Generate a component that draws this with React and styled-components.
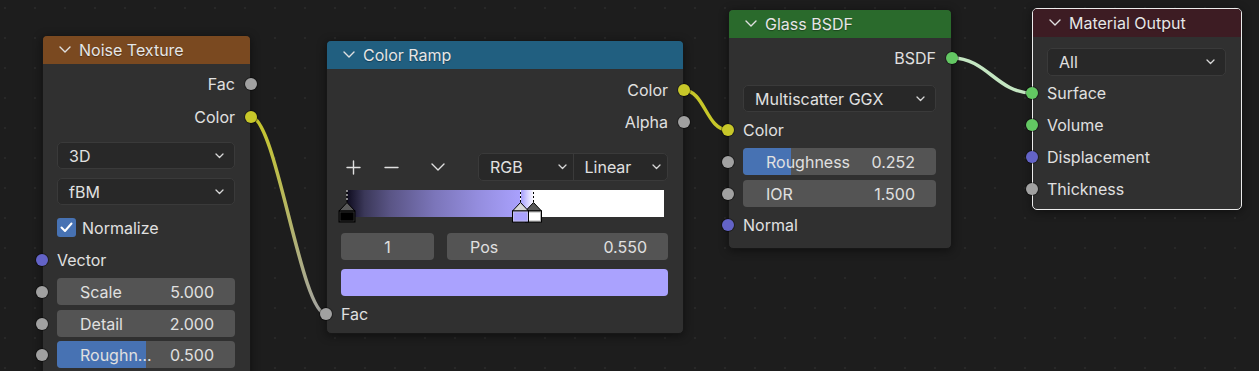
import React from 'react';
import styled, { createGlobalStyle } from 'styled-components';

const GlobalStyle = createGlobalStyle`
  html, body {
    margin: 0;
    padding: 0;
  }
  body {
    background: #1d1d1d;
    font-family: Inter, "Noto Sans", sans-serif;
    overflow: hidden;
  }
`;

const Canvas = styled.div`
  position: relative;
  width: 1259px;
  height: 371px;
  overflow: hidden;
  background-color: #1d1d1d;
  background-image: radial-gradient(circle at center, #282828 0 1px, transparent 1.5px);
  background-size: 30px 30px;
  background-position: -10px -7px;
`;

const Links = styled.svg`
  position: absolute;
  left: 0;
  top: 0;
`;

const Node = styled.div`
  position: absolute;
  left: ${(p) => p.$x}px;
  top: ${(p) => p.$y}px;
  width: ${(p) => p.$w}px;
  box-sizing: border-box;
  background: #303030;
  border-radius: 5px;
  border: 1px solid ${(p) => (p.$selected ? '#ececec' : '#171717')};
  box-shadow: 0 2px 10px rgba(0, 0, 0, 0.45);
  color: #e0e0e0;
  font-size: 16px;
`;

const Header = styled.div`
  height: 28px;
  display: flex;
  align-items: center;
  gap: 8px;
  padding-left: 16px;
  background: ${(p) => p.$color};
  border-radius: 4px 4px 0 0;
  color: #e6e6e6;
  text-shadow: 0 1px 1px rgba(0, 0, 0, 0.35);
`;

const Body = styled.div`
  display: flex;
  flex-direction: column;
  padding-bottom: ${(p) => p.$pb || 0}px;
`;

const Row = styled.div`
  position: relative;
  display: flex;
  align-items: center;
  justify-content: ${(p) => (p.$out ? 'flex-end' : 'flex-start')};
  height: ${(p) => p.$h || 27}px;
  margin-top: ${(p) => p.$mt || 0}px;
  padding: 0 15px 0 14px;
  gap: 6px;
`;

const Socket = styled.span`
  position: absolute;
  top: 50%;
  ${(p) => (p.$out ? 'right: -7px;' : 'left: -7px;')}
  width: 12px;
  height: 12px;
  margin-top: -6px;
  border-radius: 50%;
  background: ${(p) => p.$color};
  box-shadow: 0 0 0 1px rgba(0, 0, 0, 0.35);
`;

const Field = styled.div`
  position: relative;
  flex: ${(p) => (p.$w ? `0 0 ${p.$w}px` : '1')};
  margin-left: ${(p) => p.$ml || 0}px;
  height: 100%;
  display: flex;
  align-items: center;
  justify-content: ${(p) => (p.$center ? 'center' : 'space-between')};
  padding: ${(p) => (p.$center ? '0' : '0 21px 0 23px')};
  box-sizing: border-box;
  background: #545454;
  border-radius: 4px;
  overflow: hidden;
  &::before {
    content: '';
    position: absolute;
    left: 0;
    top: 0;
    bottom: 0;
    width: ${(p) => p.$fill || 0}%;
    background: #4772b3;
  }
  span {
    position: relative;
  }
`;

const Select = styled.div`
  flex: 1;
  height: 100%;
  display: flex;
  align-items: center;
  justify-content: space-between;
  padding: 0 10px 0 11px;
  box-sizing: border-box;
  background: #282828;
  border: 1px solid #3a3a3a;
  border-radius: 5px;
`;

const SegSelect = styled.div`
  margin-left: auto;
  width: 190px;
  height: 100%;
  display: flex;
  box-sizing: border-box;
  background: #282828;
  border: 1px solid #3a3a3a;
  border-radius: 5px;
`;

const Seg = styled.div`
  flex: 1;
  display: flex;
  align-items: center;
  justify-content: space-between;
  padding: 0 6px 0 11px;
  & + & {
    border-left: 1px solid #3a3a3a;
  }
`;

const Check = styled.span`
  width: 19px;
  height: 19px;
  border-radius: 3px;
  background: #4772b3;
  display: flex;
  align-items: center;
  justify-content: center;
`;

const IconBtn = styled.span`
  width: ${(p) => p.$w}px;
  margin-left: ${(p) => p.$ml || 0}px;
  display: flex;
  justify-content: center;
  align-items: center;
`;

const RampWrap = styled.div`
  position: relative;
  flex: 1;
  height: 100%;
  margin: 0 4px 0 6px;
`;

const RampBar = styled.div`
  height: 100%;
  background: linear-gradient(
    to right,
    #0f0c1f 0%,
    #3b3859 5.5%,
    #5a5586 13.75%,
    #7b75b9 27.5%,
    #948dde 41.25%,
    #a9a1fd 55%,
    #d6d2ff 57%,
    #ffffff 59%,
    #ffffff 100%
  );
`;

const Stops = styled.svg`
  position: absolute;
  left: -10px;
  top: 0;
  overflow: visible;
`;

const Swatch = styled.div`
  flex: 1;
  height: 100%;
  border-radius: 4px;
  background: #aaa2fe;
`;

const Chevron = ({ size = 12 }) => (
  <svg width={size} height={size * 0.6} viewBox="0 0 12 7" fill="none">
    <path d="M1 1 L6 6 L11 1" stroke="#e0e0e0" strokeWidth="1.4" strokeLinecap="round" strokeLinejoin="round" />
  </svg>
);

const SmallChevron = () => (
  <svg width="9" height="6" viewBox="0 0 9 6" fill="none">
    <path d="M1 1 L4.5 4.5 L8 1" stroke="#d8d8d8" strokeWidth="1.3" strokeLinecap="round" strokeLinejoin="round" />
  </svg>
);

const GRAY = '#a1a1a1';
const YELLOW = '#c7c729';
const PURPLE = '#6363c7';
const GREEN = '#63c763';

function Out({ label, color, h, mt }) {
  return (
    <Row $out $h={h} $mt={mt}>
      {label}
      <Socket $out $color={color} />
    </Row>
  );
}

function In({ label, color, h, mt }) {
  return (
    <Row $h={h} $mt={mt}>
      <Socket $color={color} />
      {label}
    </Row>
  );
}

function NumRow({ label, value, fill, mt }) {
  return (
    <Row $mt={mt}>
      <Socket $color={GRAY} />
      <Field $fill={fill}>
        <span>{label}</span>
        <span>{value}</span>
      </Field>
    </Row>
  );
}

function Dropdown({ label, mt, h }) {
  return (
    <Row $mt={mt} $h={h}>
      <Select>
        {label}
        <SmallChevron />
      </Select>
    </Row>
  );
}

function Marker({ x, tri, fill }) {
  return (
    <g>
      <line x1={x} y1="0" x2={x} y2="12" stroke="#000" strokeWidth="1" />
      <line x1={x} y1="0" x2={x} y2="12" stroke="#fff" strokeWidth="1" strokeDasharray="2 2" />
      <path d={`M${x - 8} 21 L${x} 12.5 L${x + 8} 21 Z`} fill={tri} stroke="#000" strokeWidth="1" />
      <rect x={x - 8} y="21" width="16" height="11" fill={fill} stroke="#000" strokeWidth="1" />
      <rect x={x - 7} y="22" width="14" height="9" fill="none" stroke={tri} strokeWidth="0.8" opacity="0.6" />
    </g>
  );
}

function link(x1, y1, x2, y2, d) {
  return `M${x1} ${y1} C${x1 + d} ${y1} ${x2 - d} ${y2} ${x2} ${y2}`;
}

function NoiseTexture() {
  return (
    <Node $x={42} $y={35} $w={209}>
      <Header $color="#7a4920">
        <Chevron />
        Noise Texture
      </Header>
      <Body $pb={12}>
        <Out label="Fac" color={GRAY} h={32} mt={4} />
        <Out label="Color" color={YELLOW} h={34} />
        <Dropdown label="3D" mt={8} />
        <Dropdown label="fBM" mt={9} />
        <Row $mt={9}>
          <Check>
            <svg width="13" height="11" viewBox="0 0 13 11" fill="none">
              <path d="M1.5 5.5 L5 9 L11.5 1.5" stroke="#fff" strokeWidth="2" strokeLinecap="round" strokeLinejoin="round" />
            </svg>
          </Check>
          Normalize
        </Row>
        <In label="Vector" color={PURPLE} mt={5} />
        <NumRow label="Scale" value="5.000" mt={5} />
        <NumRow label="Detail" value="2.000" mt={5} />
        <NumRow label="Roughn…" value="0.500" fill={50} mt={4} />
      </Body>
    </Node>
  );
}

function ColorRamp() {
  return (
    <Node $x={326} $y={40} $w={358}>
      <Header $color="#215f80">
        <Chevron />
        Color Ramp
      </Header>
      <Body $pb={5}>
        <Out label="Color" color={YELLOW} h={32} mt={5} />
        <Out label="Alpha" color={GRAY} h={32} />
        <Row $mt={15} $h={28}>
          <IconBtn $w={25}>
            <svg width="15" height="15" viewBox="0 0 15 15">
              <path d="M7.5 1 V14 M1 7.5 H14" stroke="#e0e0e0" strokeWidth="1.4" strokeLinecap="round" />
            </svg>
          </IconBtn>
          <IconBtn $w={26} $ml={6}>
            <svg width="15" height="3" viewBox="0 0 15 3">
              <path d="M1 1.5 H14" stroke="#e0e0e0" strokeWidth="1.4" strokeLinecap="round" />
            </svg>
          </IconBtn>
          <IconBtn $w={27} $ml={14}>
            <svg width="14" height="8" viewBox="0 0 14 8" fill="none">
              <path d="M1 1 L7 7 L13 1" stroke="#e0e0e0" strokeWidth="1.4" strokeLinecap="round" strokeLinejoin="round" />
            </svg>
          </IconBtn>
          <SegSelect>
            <Seg>
              RGB
              <SmallChevron />
            </Seg>
            <Seg>
              Linear
              <SmallChevron />
            </Seg>
          </SegSelect>
        </Row>
        <Row $mt={9}>
          <RampWrap>
            <RampBar />
            <Stops width="337" height="33" viewBox="0 0 337 33">
              <Marker x={10} tri="#5a5a5a" fill="#000" />
              <Marker x={196.5} tri="#5a5a5a" fill="#fff" />
              <Marker x={183.5} tri="#d8d8d8" fill="#aaa2fe" />
            </Stops>
          </RampWrap>
        </Row>
        <Row $mt={16} $h={27}>
          <Field $w={93} $center>
            <span>1</span>
          </Field>
          <Field $ml={7}>
            <span>Pos</span>
            <span>0.550</span>
          </Field>
        </Row>
        <Row $mt={9}>
          <Swatch />
        </Row>
        <In label="Fac" color={GRAY} h={28} mt={4} />
      </Body>
    </Node>
  );
}

function GlassBSDF() {
  return (
    <Node $x={728} $y={9} $w={224}>
      <Header $color="#2a6a2c">
        <Chevron />
        Glass BSDF
      </Header>
      <Body $pb={9}>
        <Out label="BSDF" color={GREEN} h={32} mt={4} />
        <Dropdown label="Multiscatter GGX" mt={11} />
        <In label="Color" color={YELLOW} h={28} mt={4} />
        <NumRow label="Roughness" value="0.252" fill={25} mt={4} />
        <NumRow label="IOR" value="1.500" mt={5} />
        <In label="Normal" color={PURPLE} h={28} mt={4} />
      </Body>
    </Node>
  );
}

function MaterialOutput() {
  return (
    <Node $x={1032} $y={8} $w={210} $selected>
      <Header $color="#3d1c23">
        <Chevron />
        Material Output
      </Header>
      <Body $pb={4}>
        <Dropdown label="All" mt={11} h={28} />
        <In label="Surface" color={GREEN} h={32} mt={1} />
        <In label="Volume" color={GREEN} h={32} />
        <In label="Displacement" color={PURPLE} h={32} />
        <In label="Thickness" color={GRAY} h={32} />
      </Body>
    </Node>
  );
}

export default function App() {
  return (
    <>
      <GlobalStyle />
      <Canvas>
        <Links width="1259" height="371" viewBox="0 0 1259 371">
          <defs>
            <linearGradient id="noiseLink" gradientUnits="userSpaceOnUse" x1="251" y1="117" x2="326" y2="314">
              <stop offset="0" stopColor={YELLOW} />
              <stop offset="1" stopColor="#a3a3a3" />
            </linearGradient>
          </defs>
          <path d={link(251, 117, 326, 314, 25)} stroke="url(#noiseLink)" strokeWidth="3.5" fill="none" />
          <path d={link(683, 90, 728, 130, 22)} stroke={YELLOW} strokeWidth="3.5" fill="none" />
          <path d={link(952, 58, 1032, 93, 35)} stroke="#c4e6c2" strokeWidth="3.5" fill="none" />
        </Links>
        <NoiseTexture />
        <ColorRamp />
        <GlassBSDF />
        <MaterialOutput />
      </Canvas>
    </>
  );
}
